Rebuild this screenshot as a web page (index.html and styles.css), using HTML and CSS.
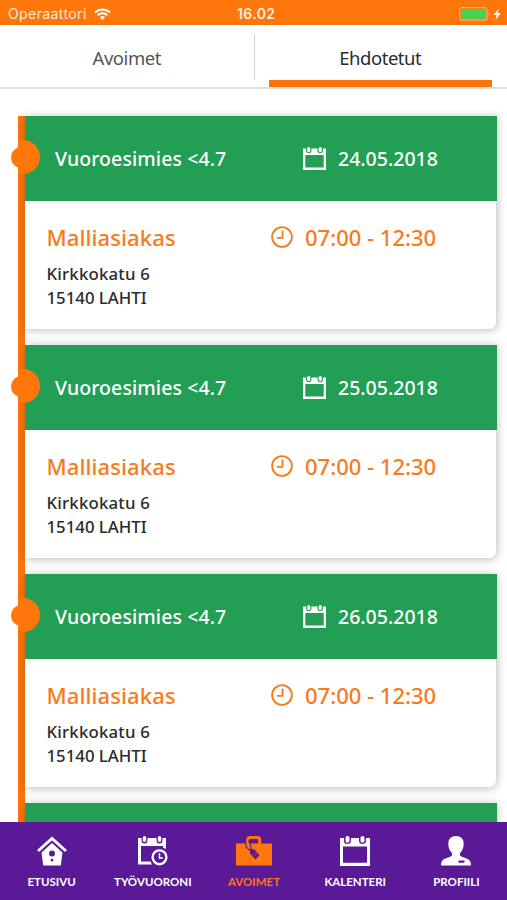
FILE: index.html
```
<!DOCTYPE html>
<html lang="fi">
<head>
  <meta charset="UTF-8">
  <meta name="viewport" content="width=device-width, initial-scale=1">
  <title>Työvuorot</title>
  <link rel="stylesheet" href="styles.css">
</head>
<body>
  <svg class="symbols" width="0" height="0">
    <symbol id="calendar" viewBox="0 0 30 30">
      <path fill="currentColor" fill-rule="evenodd" d="M0 2h4v2.500a3.500 3.500 0 0 0 7 0V2h8v2.500a3.500 3.500 0 0 0 7 0V2h4v28H0zM3 10.500v16.300h24v-16.300z"/>
      <rect fill="currentColor" x="5.500" y="0" width="4" height="6.700" rx="2"/>
      <rect fill="currentColor" x="20.500" y="0" width="4" height="6.700" rx="2"/>
    </symbol>
    <symbol id="clock" viewBox="0 0 22 22">
      <g fill="none" stroke="currentColor">
        <circle cx="11" cy="11" r="9.900" stroke-width="1.800"/>
        <path d="M11.500 4.500v7.300H6" stroke-width="1.800"/>
      </g>
    </symbol>
  </svg>

  <header class="status">
    <span class="carrier">Operaattori</span>
    <svg class="wifi" viewBox="0 0 17 12">
      <g fill="none" stroke="#fff" stroke-width="2">
        <path d="M1 4.500a10.600 10.600 0 0 1 15 0"/>
        <path d="M3.700 7.200a6.800 6.800 0 0 1 9.600 0"/>
      </g>
      <path fill="#fff" d="M8.500 12L5.900 9.300a3.700 3.700 0 0 1 5.200 0z"/>
    </svg>
    <span class="time">16.02</span>
    <svg class="battery" viewBox="0 0 44 14">
      <rect x=".6" y=".6" width="27.300" height="12.600" rx="2.500" fill="none" stroke="#ffb06c" stroke-width="1.200"/>
      <rect x="2" y="2" width="24.500" height="9.800" rx="1" fill="#43d351"/>
      <path d="M29.500 5v4q1.500-.5 1.500-2t-1.500-2z" fill="#ffb06c"/>
      <path d="M39.800 1.500L34.500 8h3.200l-1.200 5L42 6h-3.200z" fill="#fff"/>
    </svg>
  </header>

  <nav class="tabs">
    <a class="tab">Avoimet</a>
    <a class="tab active">Ehdotetut</a>
  </nav>

  <main class="content">
    <div class="timeline">
      <article class="card">
        <div class="card-header">
          <span class="title">Vuoroesimies &lt;4.7</span>
          <svg class="date-icon"><use href="#calendar"/></svg>
          <span class="date">24.05.2018</span>
        </div>
        <div class="card-body">
          <div class="row">
            <span class="customer">Malliasiakas</span>
            <svg class="clock-icon"><use href="#clock"/></svg>
            <span class="hours">07:00 - 12:30</span>
          </div>
          <p class="address"><span class="street">Kirkkokatu 6</span><br><span class="city">15140 LAHTI</span></p>
        </div>
      </article>
      <article class="card">
        <div class="card-header">
          <span class="title">Vuoroesimies &lt;4.7</span>
          <svg class="date-icon"><use href="#calendar"/></svg>
          <span class="date">25.05.2018</span>
        </div>
        <div class="card-body">
          <div class="row">
            <span class="customer">Malliasiakas</span>
            <svg class="clock-icon"><use href="#clock"/></svg>
            <span class="hours">07:00 - 12:30</span>
          </div>
          <p class="address"><span class="street">Kirkkokatu 6</span><br><span class="city">15140 LAHTI</span></p>
        </div>
      </article>
      <article class="card">
        <div class="card-header">
          <span class="title">Vuoroesimies &lt;4.7</span>
          <svg class="date-icon"><use href="#calendar"/></svg>
          <span class="date">26.05.2018</span>
        </div>
        <div class="card-body">
          <div class="row">
            <span class="customer">Malliasiakas</span>
            <svg class="clock-icon"><use href="#clock"/></svg>
            <span class="hours">07:00 - 12:30</span>
          </div>
          <p class="address"><span class="street">Kirkkokatu 6</span><br><span class="city">15140 LAHTI</span></p>
        </div>
      </article>
      <article class="card">
        <div class="card-header"></div>
      </article>
    </div>
  </main>

  <footer class="menu">
    <a class="menu-item">
      <svg class="menu-icon" viewBox="0 0 36 30">
        <path d="M4 15L18 2.500 32 15" fill="none" stroke="#fff" stroke-width="3"/>
        <path fill="#fff" fill-rule="evenodd" d="M18 7L28.500 16.500l-1.700 13H9.200l-1.700-13zM18 14.600a3 3 0 1 0 0 6 3 3 0 0 0 0-6zM18 22.800a1.400 1.400 0 1 0 0 2.800 1.400 1.400 0 0 0 0-2.800z"/>
      </svg>
      <span class="label">ETUSIVU</span>
    </a>
    <a class="menu-item">
      <svg class="menu-icon" viewBox="0 0 36 30">
        <path fill="#fff" d="M3 2h3.500v2.500a3 3 0 0 0 6 0V2h9v2.500a3 3 0 0 0 6 0V2H31v11l-3-1.500V10H6v15.500h9.500l1.500 3H3z"/>
        <rect fill="#fff" x="7.800" width="3.400" height="6" rx="1.700"/>
        <rect fill="#fff" x="22.800" width="3.400" height="6" rx="1.700"/>
        <g fill="none" stroke="#fff">
          <circle cx="24.500" cy="21.300" r="6.900" stroke-width="2.400"/>
          <path d="M24.500 17v5H28" stroke-width="1.500"/>
        </g>
      </svg>
      <span class="label">TYÖVUORONI</span>
    </a>
    <a class="menu-item active">
      <svg class="menu-icon" viewBox="0 0 36 30">
        <path fill="#ff760b" d="M0 7.500h36v22H0z"/>
        <path d="M11.700 8V4q0-2.500 2.500-2.500h7q2.500 0 2.500 2.500v4" fill="none" stroke="#ff760b" stroke-width="3"/>
        <path d="M10 7.500Q9 12 15.500 15M12.500 4.500q2.500 4 3 10" fill="none" stroke="#5a1996" stroke-width="1.200"/>
        <path fill="#5a1996" d="M14 13l4.500.5 5 5.500-4 4.500-5.500-6z"/>
        <path d="M17 17l2.500 2.800M19 15.500l2.500 2.800" stroke="#b04b4b" stroke-width=".8"/>
      </svg>
      <span class="label">AVOIMET</span>
    </a>
    <a class="menu-item">
      <svg class="menu-icon"><use href="#calendar"/></svg>
      <span class="label">KALENTERI</span>
    </a>
    <a class="menu-item">
      <svg class="menu-icon" viewBox="0 0 36 30">
        <path fill="#fff" fill-rule="evenodd" d="M18 0c4.800 0 7.700 3 7.700 7.500 0 4.300-1.300 7-3.600 9.500-.7 2.600.2 3.300 2.900 4.200 5 1.700 8 2.300 8 8.300H3c0-6 3-6.600 8-8.300 2.700-.9 3.600-1.600 2.900-4.200-2.300-2.500-3.600-5.200-3.600-9.500C10.300 3 13.200 0 18 0zM20.500 24.500v2.200h6v-2.200z"/>
      </svg>
      <span class="label">PROFIILI</span>
    </a>
  </footer>
</body>
</html>
```
FILE: styles.css
```
* {
  box-sizing: border-box;
}
body {
  margin: 0;
  height: 900px;
  display: flex;
  flex-direction: column;
  overflow: hidden;
  background: #fff;
  font-family: "Noto Sans", sans-serif;
  color: #2b2b2b;
}
svg {
  display: block;
  flex: none;
}
span {
  white-space: nowrap;
}
.symbols {
  position: absolute;
}
.status {
  display: grid;
  grid-template-columns: 86px 143px 1fr 44px;
  align-items: center;
  height: 25px;
  flex: none;
  padding: 2px 4px 0 8px;
  background: #ff760b;
  color: #fff;
  font-family: Inter, "Liberation Sans", sans-serif;
  font-size: 14px;
}
.carrier {
  letter-spacing: 0.4px;
  color: #ffe9d8;
}
.wifi {
  width: 17px;
  height: 12px;
}
.time {
  font-weight: 600;
  letter-spacing: 0.4px;
  color: #fff0e4;
}
.battery {
  width: 44px;
  height: 14px;
}
.tabs {
  display: grid;
  grid-template-columns: 1fr 1fr;
  flex: none;
  height: 64px;
  padding-top: 9px;
  border-bottom: 2px solid #dedede;
}
.tab {
  height: 46px;
  line-height: 48px;
  text-align: center;
  font-size: 18.500px;
  letter-spacing: -0.450px;
  color: #555;
}
.tab:first-child {
  margin-right: -1px;
  border-right: 1px solid #d4d4d4;
}
.tab.active {
  height: 53px;
  margin: 0 15px;
  border-bottom: 7px solid #fa730c;
  color: #2b2b2b;
}
.content {
  flex: 1;
  min-height: 0;
  overflow: hidden;
  padding: 26.500px 11px 0 18px;
}
.timeline {
  border-left: 7.500px solid #fb750c;
}
.card {
  position: relative;
  height: 213.500px;
  margin-bottom: 15.500px;
  border-radius: 0 0 7px 0;
  background: #fff;
  box-shadow: 1px 1px 10px rgba(0, 0, 0, .28);
}
/* timeline dot: small circle left of the line, large one from the line on */
.card::before {
  content: "";
  position: absolute;
  left: -14px;
  top: 31.500px;
  width: 20.500px;
  height: 20.500px;
  border-radius: 50%;
  background: #ff760b;
}
.card-header {
  position: relative;
  display: flex;
  align-items: center;
  height: 85.500px;
  margin-right: -1px;
  padding: 0 0 0 30px;
  background: #229f54;
  color: #fff;
  font-size: 19.500px;
  font-weight: 500;
}
.card-header::before {
  content: "";
  position: absolute;
  left: -19px;
  top: 24.500px;
  width: 34px;
  height: 34px;
  border-radius: 50%;
  clip-path: inset(0 0 0 12px);
  background: #ff760b;
}
.title {
  width: 248px;
  letter-spacing: 0.080px;
}
.date-icon {
  width: 23px;
  height: 23px;
  margin-right: 12px;
}
.card-body {
  padding: 20px 0 0 21.500px;
}
.row {
  display: flex;
  align-items: center;
  height: 32px;
  font-size: 22px;
  font-weight: 500;
  color: #f67b1d;
}
.customer {
  width: 224.500px;
  letter-spacing: 0.100px;
}
.clock-icon {
  width: 22px;
  height: 22px;
  margin-right: 12px;
}
.address {
  margin: 9px 0 0;
  font-size: 16.800px;
  font-weight: 500;
  line-height: 24px;
}
.street {
  letter-spacing: 0.200px;
}
.menu {
  display: grid;
  grid-template-columns: repeat(5, 1fr);
  flex: none;
  height: 78px;
  padding: 14px 0 0 1px;
  background: #5a1996;
  color: #fff;
}
.menu-item {
  display: flex;
  flex-direction: column;
  align-items: center;
}
.menu-icon {
  width: 36px;
  height: 30px;
}
.label {
  margin-top: 7px;
  font-family: Lato, sans-serif;
  font-size: 11.500px;
  font-weight: 700;
  line-height: 18px;
}
.menu-item.active .label {
  color: #ff760b;
}
```
